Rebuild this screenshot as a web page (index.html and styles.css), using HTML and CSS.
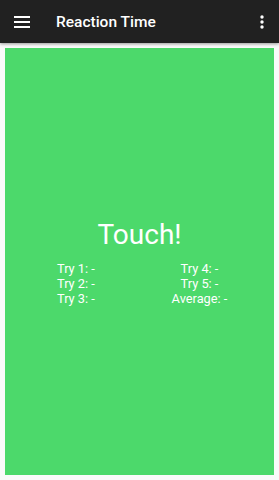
FILE: index.html
```html
<!DOCTYPE html>
<html>
<head>
    <title>Reaction Time</title>
    <link rel="stylesheet" href="styles.css">
</head>
<body>
    <div class="toolbar">
        <svg class="menu-icon" width="16" height="12" viewBox="0 0 16 12">
            <rect x="0" y="0" width="16" height="2" fill="#fff"/>
            <rect x="0" y="5" width="16" height="2" fill="#fff"/>
            <rect x="0" y="10" width="16" height="2" fill="#fff"/>
        </svg>
        <div class="title">Reaction Time</div>
        <svg class="more-icon" width="4" height="14" viewBox="0 0 4 14">
            <circle cx="2" cy="2" r="1.7" fill="#fff"/>
            <circle cx="2" cy="7" r="1.7" fill="#fff"/>
            <circle cx="2" cy="12" r="1.7" fill="#fff"/>
        </svg>
    </div>

    <div class="content">
        <div class="touch-area">
            <div class="touch-text">Touch!</div>
            <div class="results">
                <div class="left">Try 1: -</div>
                <div class="right">Try 4: -</div>
                <div class="left">Try 2: -</div>
                <div class="right">Try 5: -</div>
                <div class="left">Try 3: -</div>
                <div class="right">Average: -</div>
            </div>
        </div>
    </div>
</body>
</html>
```

FILE: styles.css
```css
html, body {
    margin: 0;
    padding: 0;
    height: 100%;
}

body {
    font-family: Roboto, 'Liberation Sans', sans-serif;
    background-color: #fafafa;
}

.toolbar {
    height: 43px;
    background-color: #212121;
    display: flex;
    align-items: center;
    padding: 0 14px;
    box-shadow: 0 1px 3px rgba(0, 0, 0, 0.4);
    position: relative;
}

.menu-icon {
    flex-shrink: 0;
}

.title {
    color: #fff;
    font-size: 15.5px;
    font-weight: 500;
    margin-left: 26px;
    flex: 1;
}

.more-icon {
    margin-right: 1px;
}

.content {
    padding: 5px;
    height: 437px;
    box-sizing: border-box;
}

.touch-area {
    background-color: #4cd96b;
    height: 100%;
    display: flex;
    flex-direction: column;
    align-items: center;
    justify-content: center;
    color: #fff;
}

.touch-text {
    font-size: 28px;
    margin-bottom: 10px;
    margin-top: 1px;
}

.results {
    align-self: flex-start;
    margin-left: 52px;
    display: grid;
    grid-template-columns: 110px 65px;
    font-size: 12.8px;
    line-height: 15px;
}

.left {
    text-align: left;
}

.right {
    text-align: center;
    white-space: nowrap;
}
```
